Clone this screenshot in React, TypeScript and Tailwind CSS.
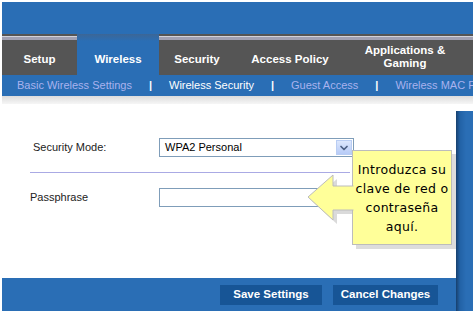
import { ChevronDown } from "lucide-react";

const tabs = [
  { label: "Setup", w: "w-[75px]" },
  { label: "Wireless", w: "w-[82px]", active: true },
  { label: "Security", w: "w-[76px]" },
  { label: "Access Policy", w: "w-[110px]" },
];

const subLinks = [
  { label: "Basic Wireless Settings" },
  { label: "Wireless Security", active: true },
  { label: "Guest Access" },
  { label: "Wireless MAC Filter" },
];

const Callout = () => {
  return (
    <div className="absolute left-[306px] top-[148px] h-[104px] w-[152px]">
      <svg className="absolute left-0 top-0" width="152" height="104">
        <polygon
          points="6,53 31,31 31,42 52,42 52,66 31,66 31,76"
          fill="#dadada"
        />
      </svg>
      <div className="absolute left-[46px] top-[2px] flex h-[95px] w-[100px] flex-col items-center justify-center border border-[#bcbcbc] bg-[#ffff99] pt-[1px] text-center font-['DejaVu_Sans',sans-serif] text-[12.5px] leading-[19px] tracking-[0.3px] text-black shadow-[4px_4px_0_#dcdcdc]">
        <span>Introduzca su</span>
        <span>clave de red o</span>
        <span>contraseña</span>
        <span>aquí.</span>
      </div>
      <svg className="absolute left-0 top-0" width="152" height="104">
        <polygon
          points="2,49 27,27 27,38 48,38 48,62 27,62 27,72"
          fill="#ffff99"
        />
        <polyline
          points="47.5,38 27,38 27,27 2,49 27,72 27,62 47.5,62"
          fill="none"
          stroke="#bcbcbc"
          strokeWidth="1"
        />
      </svg>
    </div>
  );
};

export default function App() {
  return (
    <div className="relative h-[313px] w-[475px] overflow-hidden bg-white p-[2px] font-['Liberation_Sans',Arial,sans-serif]">
      <div className="flex h-full flex-col">
        <div className="h-[32px] bg-[#2a6eb5]" />

        <div className="flex h-[41px] bg-[linear-gradient(#555_0,#555_2px,#d2d2da_2px,#d2d2da_3px,#a0a0b2_3px,#a0a0b2_6px,#555_6px)] text-[11.5px] font-bold text-white">
          {tabs.map((t) => (
            <div
              key={t.label}
              className={`${t.w} flex items-center justify-center pt-[10px] ${
                t.active
                  ? "bg-[linear-gradient(#3c6696,#2a6eb5_7px)] pt-[9px]"
                  : ""
              }`}
            >
              {t.label}
            </div>
          ))}
          <div className="flex flex-1 flex-col items-center justify-center pt-[5px] pr-[8px] leading-[13px]">
            <span>Applications &amp;</span>
            <span>Gaming</span>
          </div>
        </div>

        <div className="flex h-[21px] items-center overflow-hidden whitespace-nowrap bg-[#2a6eb5] pl-[15px] text-[11px]">
          {subLinks.map((s, i) => (
            <div key={s.label} className="flex shrink-0 items-center">
              {i > 0 && (
                <span className="mx-[17px] font-bold text-white">|</span>
              )}
              <span className={s.active ? "text-white" : "text-[#a9b2ee]"}>
                {s.label}
              </span>
            </div>
          ))}
        </div>

        <div className="h-[8px] bg-[linear-gradient(#dcdcdc,#f6f6f6)]" />

        <div className="flex flex-1">
          <div className="flex flex-1 flex-col">
            <div className="flex-1 bg-white pl-[28px] pt-[34px] text-[11px] text-[#222]">
              <div className="flex h-[19px] items-center">
                <span className="w-[129px] pl-[3px]">Security Mode:</span>
                <div className="flex h-[19px] w-[195px] items-center justify-between border border-[#7f9db9] bg-white pl-[5px] text-black">
                  <span>WPA2 Personal</span>
                  <div className="mr-[1px] flex h-[15px] w-[16px] items-center justify-center border border-[#b9cdf3] bg-[linear-gradient(#dce7fd,#b7cbf7)]">
                    <ChevronDown
                      size={12}
                      strokeWidth={3.5}
                      className="text-[#4d6185]"
                    />
                  </div>
                </div>
              </div>
              <div className="mt-[15px] h-px w-[320px] bg-[#aaaae4]" />
              <div className="mt-[15px] flex h-[19px] items-center">
                <span className="w-[129px]">Passphrase</span>
                <div className="h-[19px] w-[195px] border border-[#7f9db9] bg-white" />
              </div>
            </div>
            <div className="flex h-[33px] items-center justify-end gap-[11px] bg-[#2a6eb5] pr-[18px] text-[11.5px] font-bold text-white">
              <div className="flex h-[20px] w-[102px] items-center justify-center bg-[#175596]">
                Save Settings
              </div>
              <div className="flex h-[20px] w-[105px] items-center justify-center bg-[#175596]">
                Cancel Changes
              </div>
            </div>
          </div>
          <div className="flex w-[17px] flex-col">
            <div className="h-[7px] bg-white" />
            <div className="flex-1 bg-[linear-gradient(to_right,#17406e,#2262a6_4px,#2a6eb5_10px)]" />
          </div>
        </div>
      </div>
      <Callout />
    </div>
  );
}
